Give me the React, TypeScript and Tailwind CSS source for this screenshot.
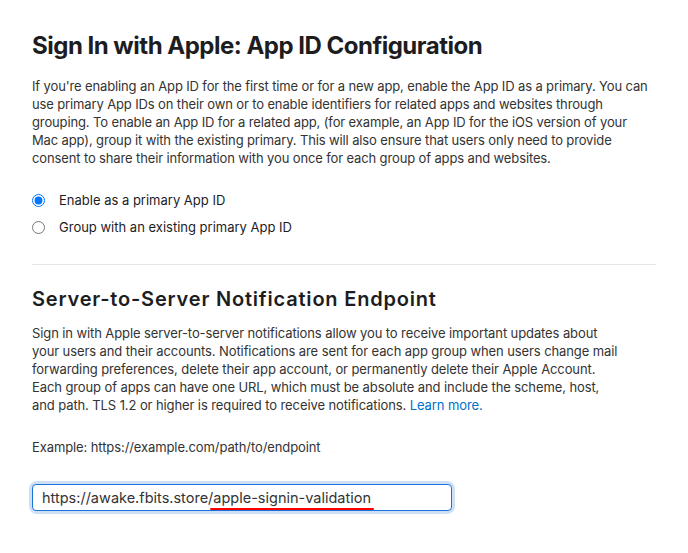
import React from "react";

const font = { fontFamily: "Inter, 'Noto Sans', sans-serif" };

const App = () => {
  return (
    <div className="min-h-[553px] bg-white text-[#333]" style={font}>
      <div className="w-[656px] pl-8 pt-[30px]">
        <h1 className="text-[24px] font-bold leading-[32px] tracking-[-0.5px] text-[#1d1d1f]">
          Sign In with Apple: App ID Configuration
        </h1>

        <p className="mt-[15px] whitespace-nowrap text-[13px] leading-[18px] tracking-[-0.13px]">
          If you're enabling an App ID for the first time or for a new app, enable the App ID as a primary. You can
          <br />
          use primary App IDs on their own or to enable identifiers for related apps and websites through
          <br />
          grouping. To enable an App ID for a related app, (for example, an App ID for the iOS version of your
          <br />
          Mac app), group it with the existing primary. This will also ensure that users only need to provide
          <br />
          consent to share their information with you once for each group of apps and websites.
        </p>

        <div className="mt-[24px] flex flex-col gap-[9px] text-[13px] leading-[18px] text-[#1d1d1f]">
          <label className="flex items-center">
            <input type="radio" name="primary" defaultChecked className="m-0 h-[13px] w-[13px]" />
            <span className="ml-[14px]">Enable as a primary App ID</span>
          </label>
          <label className="flex items-center">
            <input type="radio" name="primary" className="m-0 h-[13px] w-[13px]" />
            <span className="ml-[14px]">Group with an existing primary App ID</span>
          </label>
        </div>

        <div className="mt-[28px] w-[624px] border-t border-[#e5e5e5]" />

        <h2 className="mt-[21px] text-[20px] font-semibold leading-[26px] tracking-[0.8px] text-[#1d1d1f]">
          Server-to-Server Notification Endpoint
        </h2>

        <p className="mt-[12px] whitespace-nowrap text-[13px] leading-[18px] tracking-[-0.1px]">
          Sign in with Apple server-to-server notifications allow you to receive important updates about
          <br />
          your users and their accounts. Notifications are sent for each app group when users change mail
          <br />
          forwarding preferences, delete their app account, or permanently delete their Apple Account.
          <br />
          Each group of apps can have one URL, which must be absolute and include the scheme, host,
          <br />
          and path. TLS 1.2 or higher is required to receive notifications.{" "}
          <a className="text-[#0070c9]" href="#">
            Learn more.
          </a>
        </p>

        <p className="mt-[24px] text-[13px] leading-[18px] tracking-[-0.1px]">
          Example: https://example.com/path/to/endpoint
        </p>

        <div className="mt-[28px] w-[420px] rounded-[5px] shadow-[0_0_0_3px_#cfe0f5]">
          <div className="flex h-[27px] items-center rounded-[4px] border border-[#1a73d9] px-[9px] text-[14.5px] text-[#333]">
            <span>https://awake.fbits.store/</span>
            <span className="relative">
              apple-signin-validation
              <span className="absolute bottom-[-2px] left-[-3px] right-[-3px] h-[2px] rounded bg-[#f00]" />
            </span>
          </div>
        </div>
      </div>
    </div>
  );
};

export default App;
